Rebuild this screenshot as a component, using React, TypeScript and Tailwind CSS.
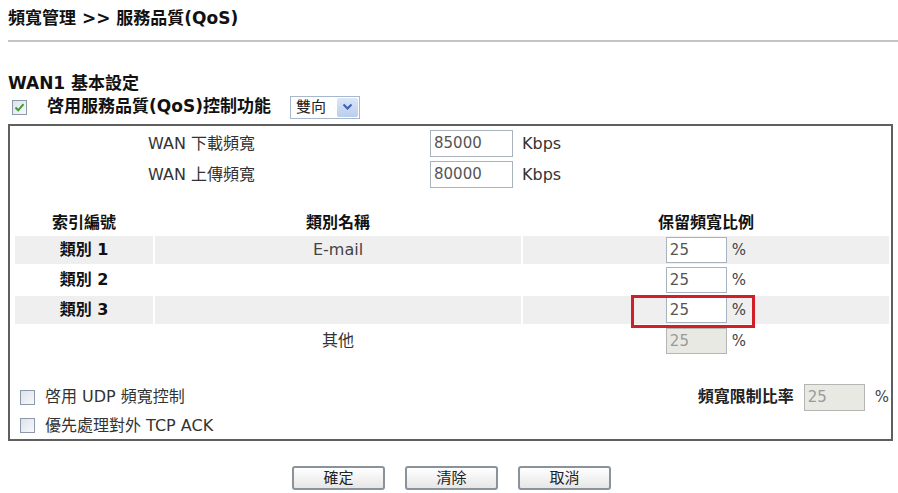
import React from 'react';

const rows = [
  { id: '類別 1', name: 'E-mail', value: '25', shaded: true },
  { id: '類別 2', name: '', value: '25', shaded: false },
  { id: '類別 3', name: '', value: '25', shaded: true, marked: true },
];

const CheckBox: React.FC<{ checked?: boolean }> = ({ checked }) => (
  <span className="flex h-[15px] w-[15px] shrink-0 items-center justify-center border border-[#8b99aa] bg-gradient-to-br from-[#dde3ea] to-[#f7f9fb]">
    {checked && (
      <svg width="11" height="11" viewBox="0 0 11 11">
        <path d="M1.5 5.5 L4.2 8.3 L9.5 2.2" fill="none" stroke="#3f9b2f" strokeWidth="2" />
      </svg>
    )}
  </span>
);

const TextBox: React.FC<{ value: string; disabled?: boolean; className?: string }> = ({ value, disabled, className }) => (
  <div
    className={`flex items-center border pl-[3px] text-[15px] ${
      disabled ? 'border-[#b5b5b5] bg-[#e9e9e4] text-[#9a9a9a]' : 'border-[#a9b3bf] bg-white text-[#555]'
    } ${className ?? ''}`}
  >
    {value}
  </div>
);

const PercentInput: React.FC<{ value: string; disabled?: boolean; marked?: boolean }> = ({ value, disabled, marked }) => (
  <div className="relative flex items-center">
    <TextBox value={value} disabled={disabled} className="h-[26px] w-[61px]" />
    <span className="ml-[5px] text-[15px] text-[#444]">%</span>
    {marked && (
      <div className="absolute -left-[35px] -right-[9px] -top-[2px] -bottom-[5px] border-[3px] border-[#d21f27]" />
    )}
  </div>
);

const Button: React.FC<{ label: string }> = ({ label }) => (
  <button className="flex h-[24px] w-[93px] items-center justify-center rounded-[3px] border-2 border-[#8a939c] bg-gradient-to-b from-white to-[#e6e6e6] text-[15px] text-[#222]">
    {label}
  </button>
);

export default function App() {
  return (
    <div className="h-[493px] w-[898px] overflow-hidden bg-white font-[family-name:DejaVu_Sans,Noto_Sans_CJK_TC,sans-serif] text-[#222]">
      <div className="pl-[8px] pt-[7px] text-[17px] font-bold leading-[22px] text-[#111]">頻寬管理 &gt;&gt; 服務品質(QoS)</div>
      <div className="ml-[8px] mt-[11px] h-[2px] bg-[#c4c4c4]" />

      <div className="mt-[31px] pl-[8px] text-[17px] font-bold leading-[20px] text-[#111]">WAN1 基本設定</div>
      <div className="mt-[2px] flex h-[24px] items-center pl-[12px]">
        <CheckBox checked />
        <span className="ml-[20px] text-[17px] font-bold text-[#111]">啓用服務品質(QoS)控制功能</span>
        <div className="ml-[19px] flex h-[23px] w-[70px] items-center border border-[#a8b8cc] bg-white pl-[5px]">
          <span className="text-[15px] text-[#222]">雙向</span>
          <span className="ml-auto mr-[1px] flex h-[19px] w-[21px] items-center justify-center rounded-[2px] bg-gradient-to-b from-[#dbe6f8] to-[#b9cdee]">
            <svg width="11" height="8" viewBox="0 0 11 8">
              <path d="M1.5 1.5 L5.5 5.5 L9.5 1.5" fill="none" stroke="#3d5fb0" strokeWidth="2" />
            </svg>
          </span>
        </div>
      </div>

      <div className="ml-[8px] mt-[5px] w-[885px] border-2 border-[#5f5f5f]">
        <div className="pt-[2px]">
          {[
            ['WAN 下載頻寬', '85000'],
            ['WAN 上傳頻寬', '80000'],
          ].map(([label, v]) => (
            <div key={label} className="flex h-[31px] items-center">
              <span className="w-[420px] pl-[138px] text-[16px] text-[#333]">{label}</span>
              <TextBox value={v} className="h-[27px] w-[83px]" />
              <span className="ml-[9px] text-[16px] text-[#333]">Kbps</span>
            </div>
          ))}
        </div>

        <div className="mt-[22px] grid grid-cols-[138px_366px_1fr] gap-[2px] px-[5px] pr-[2px]">
          <div className="flex h-[22px] items-center justify-center text-[16px] font-bold text-[#111]">索引編號</div>
          <div className="flex h-[22px] items-center justify-center text-[16px] font-bold text-[#111]">類別名稱</div>
          <div className="flex h-[22px] items-center justify-center text-[16px] font-bold text-[#111]">保留頻寬比例</div>

          {rows.map((r) => (
            <React.Fragment key={r.id}>
              <div className={`flex h-[28px] items-center justify-center text-[16px] font-bold text-[#111] ${r.shaded ? 'bg-[#efefef]' : ''}`}>
                {r.id}
              </div>
              <div className={`flex h-[28px] items-center justify-center text-[16px] text-[#444] ${r.shaded ? 'bg-[#efefef]' : ''}`}>
                {r.name}
              </div>
              <div className={`flex h-[28px] items-center justify-center ${r.shaded ? 'bg-[#efefef]' : ''}`}>
                <PercentInput value={r.value} marked={r.marked} />
              </div>
            </React.Fragment>
          ))}

          <div className="h-[30px]" />
          <div className="flex h-[30px] items-center justify-center text-[16px] text-[#333]">其他</div>
          <div className="flex h-[30px] items-center justify-center">
            <PercentInput value="25" disabled />
          </div>
        </div>

        <div className="mt-[26px] flex h-[30px] items-center pl-[10px] pr-[2px]">
          <CheckBox />
          <span className="ml-[10px] text-[16px] text-[#333]">啓用 UDP 頻寬控制</span>
          <span className="ml-auto text-[16px] font-bold text-[#222]">頻寬限制比率</span>
          <TextBox value="25" disabled className="ml-[10px] h-[27px] w-[61px]" />
          <span className="ml-[10px] text-[15px] text-[#444]">%</span>
        </div>
        <div className="flex h-[27px] items-center pl-[10px]">
          <CheckBox />
          <span className="ml-[10px] text-[16px] text-[#333]">優先處理對外 TCP ACK</span>
        </div>
      </div>

      <div className="mt-[25px] flex justify-center gap-[20px] pl-[5px]">
        <Button label="確定" />
        <Button label="清除" />
        <Button label="取消" />
      </div>
    </div>
  );
}
